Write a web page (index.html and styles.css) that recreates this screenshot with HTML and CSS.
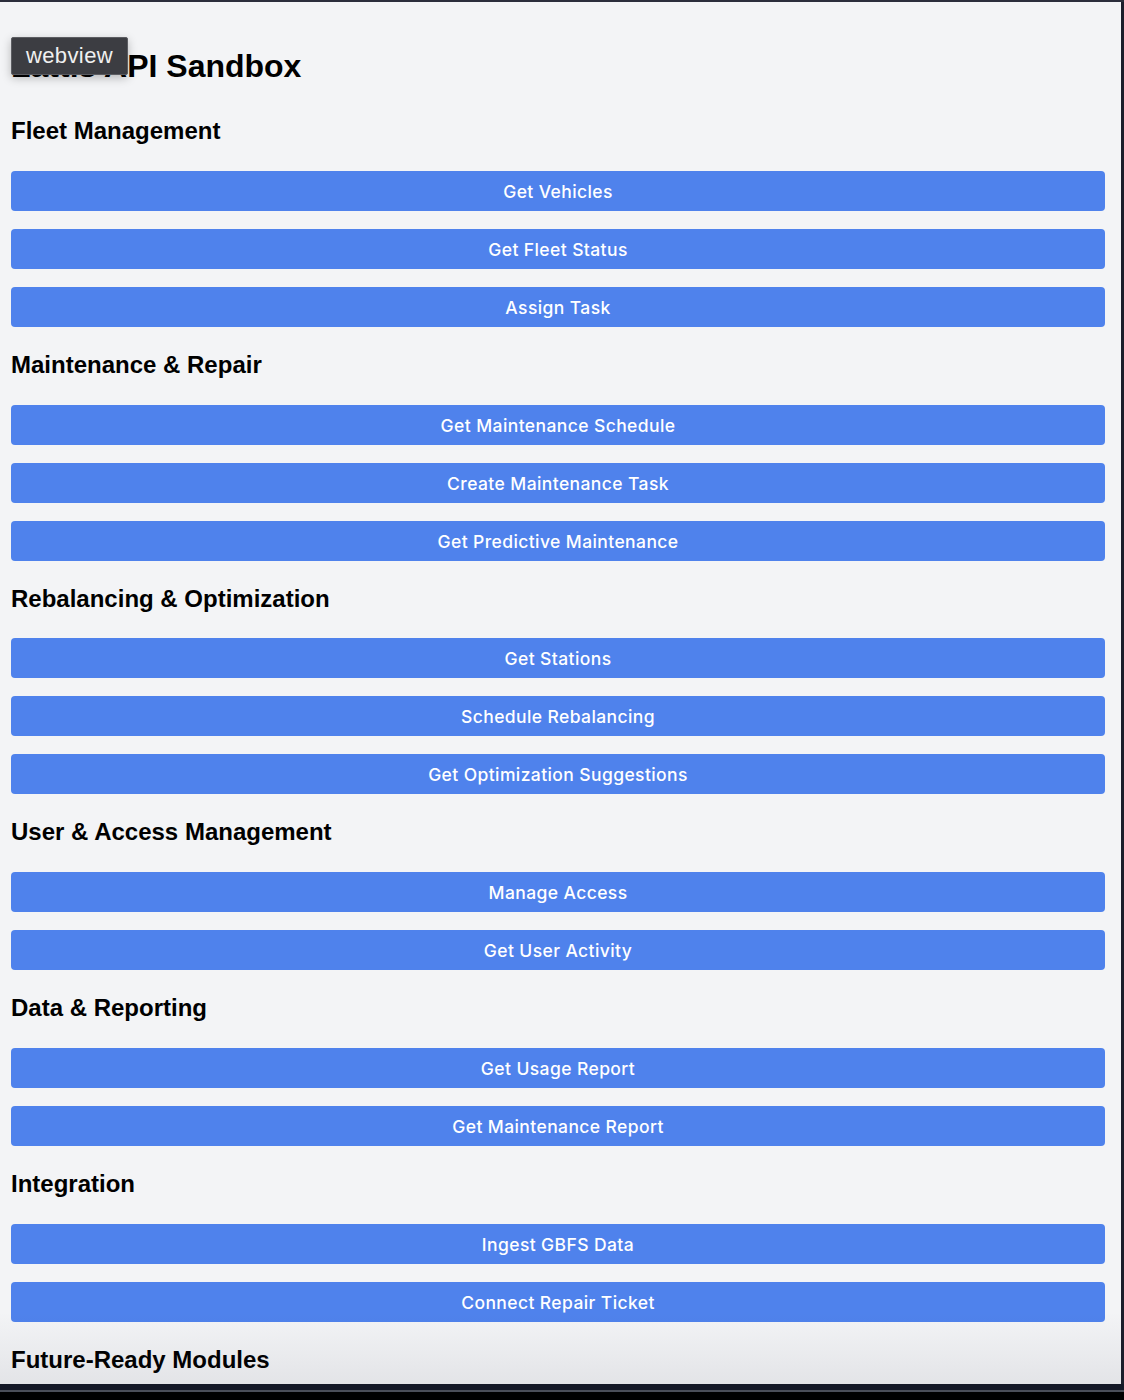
FILE: index.html
```html
<!DOCTYPE html>
<html lang="en">
<head>
<meta charset="utf-8">
<title>Lattis API Sandbox</title>
<link rel="stylesheet" href="styles.css">
</head>
<body>
<div class="frame">
  <div class="viewport">
    <main class="page">
      <h1 class="title">Lattis API Sandbox</h1>

      <section class="group">
        <h2 class="group-title">Fleet Management</h2>
        <div class="buttons">
          <button class="api-btn">Get Vehicles</button>
          <button class="api-btn">Get Fleet Status</button>
          <button class="api-btn">Assign Task</button>
        </div>
      </section>

      <section class="group">
        <h2 class="group-title">Maintenance &amp; Repair</h2>
        <div class="buttons">
          <button class="api-btn">Get Maintenance Schedule</button>
          <button class="api-btn">Create Maintenance Task</button>
          <button class="api-btn">Get Predictive Maintenance</button>
        </div>
      </section>

      <section class="group">
        <h2 class="group-title">Rebalancing &amp; Optimization</h2>
        <div class="buttons">
          <button class="api-btn">Get Stations</button>
          <button class="api-btn">Schedule Rebalancing</button>
          <button class="api-btn">Get Optimization Suggestions</button>
        </div>
      </section>

      <section class="group">
        <h2 class="group-title">User &amp; Access Management</h2>
        <div class="buttons">
          <button class="api-btn">Manage Access</button>
          <button class="api-btn">Get User Activity</button>
        </div>
      </section>

      <section class="group">
        <h2 class="group-title">Data &amp; Reporting</h2>
        <div class="buttons">
          <button class="api-btn">Get Usage Report</button>
          <button class="api-btn">Get Maintenance Report</button>
        </div>
      </section>

      <section class="group">
        <h2 class="group-title">Integration</h2>
        <div class="buttons">
          <button class="api-btn">Ingest GBFS Data</button>
          <button class="api-btn">Connect Repair Ticket</button>
        </div>
      </section>

      <section class="group">
        <h2 class="group-title">Future-Ready Modules</h2>
      </section>
    </main>
    <div class="fade"></div>
    <div class="tooltip">webview</div>
  </div>
  <div class="bottom-bar"></div>
</div>
</body>
</html>
```

FILE: styles.css
```css
html, body {
  margin: 0;
  padding: 0;
  background: #000;
}

.frame {
  width: 1124px;
  height: 1400px;
  display: flex;
  flex-direction: column;
  background: #1b1e2b;
  border-top: 2px solid #2b2e3b;
  box-sizing: border-box;
  overflow: hidden;
}

.viewport {
  position: relative;
  height: 1382px;
  flex: none;
  margin-right: 3px;
  background: #f3f4f6;
  overflow: hidden;
}

.page {
  padding: 46px 16px 0 11px;
  font-family: "Liberation Sans", Arial, sans-serif;
  color: #000;
}

.title {
  margin: 0 0 32px;
  font-size: 32px;
  line-height: 37px;
  font-weight: 700;
}

.group-title {
  margin: 24px 0 25.75px;
  font-size: 24px;
  line-height: 28px;
  font-weight: 700;
}

.buttons {
  display: flex;
  flex-direction: column;
  gap: 18px;
}

.api-btn {
  display: block;
  width: 100%;
  height: 40px;
  border: none;
  border-radius: 4px;
  background: #4f82ec;
  color: #fff;
  font-family: Inter, "Noto Sans", sans-serif;
  font-size: 17.5px;
  font-weight: 500;
  letter-spacing: 0.4px;
  padding: 1px 0 0;
  cursor: pointer;
}

.fade {
  position: absolute;
  left: 0;
  right: 0;
  bottom: 0;
  height: 72px;
  background: linear-gradient(to bottom, rgba(0, 0, 0, 0), rgba(40, 40, 60, 0.08));
  pointer-events: none;
}

.tooltip {
  position: absolute;
  left: 11px;
  top: 35px;
  width: 117px;
  height: 38px;
  box-sizing: border-box;
  background: #3c3d42;
  border: 1px solid #5c5d62;
  border-radius: 2px;
  color: #f0f0f0;
  font-family: "Liberation Sans", Arial, sans-serif;
  font-size: 22px;
  letter-spacing: 0.4px;
  line-height: 36px;
  text-align: center;
  box-shadow: 0 3px 10px rgba(0, 0, 0, 0.25);
}

.bottom-bar {
  flex: none;
  height: 16px;
  background: linear-gradient(to bottom, #141827 0, #141827 6px, #4a4e58 6px, #4a4e58 8px, #000 8px);
}
```
